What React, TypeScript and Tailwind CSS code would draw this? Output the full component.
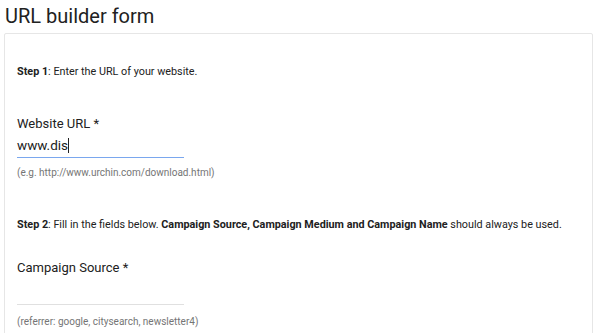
const font = { fontFamily: "Roboto, 'Liberation Sans', sans-serif" };

export default function App() {
  return (
    <div className="bg-white w-[600px] h-[333px] overflow-hidden text-[#212121]" style={font}>
      <h1 className="pl-[5px] pt-[2px] text-[20px] leading-[28px] font-normal">URL builder form</h1>
      <div className="ml-[4px] mt-[3px] w-[589px] border border-[#e6e6e6] rounded-[2px] px-[12px] pt-[31px] h-[320px]">
        <p className="text-[10.8px] leading-[14px]">
          <b className="font-bold">Step 1</b>: Enter the URL of your website.
        </p>
        <div className="mt-[36px]">
          <div className="text-[13px] leading-[18px]">Website URL *</div>
          <div className="mt-[4px] w-[167px] border-b border-[#7aa7ee] pb-[4px] text-[13.5px] leading-[16px]">
            www.dis<span className="inline-block w-px h-[15px] bg-[#212121] align-[-3px]" />
          </div>
          <div className="mt-[8px] text-[10px] leading-[14px] text-[#757575]">(e.g. http://www.urchin.com/download.html)</div>
        </div>
        <p className="mt-[38px] text-[10.8px] leading-[14px]">
          <b className="font-bold">Step 2</b>: Fill in the fields below. <b className="font-bold">Campaign Source, Campaign Medium and Campaign Name</b> should always be used.
        </p>
        <div className="mt-[27px]">
          <div className="text-[13px] leading-[18px]">Campaign Source *</div>
          <div className="mt-[4px] w-[167px] border-b border-[#e0e0e0] h-[24px]" />
          <div className="mt-[10px] text-[10px] leading-[14px] text-[#757575]">(referrer: google, citysearch, newsletter4)</div>
        </div>
      </div>
    </div>
  );
}
